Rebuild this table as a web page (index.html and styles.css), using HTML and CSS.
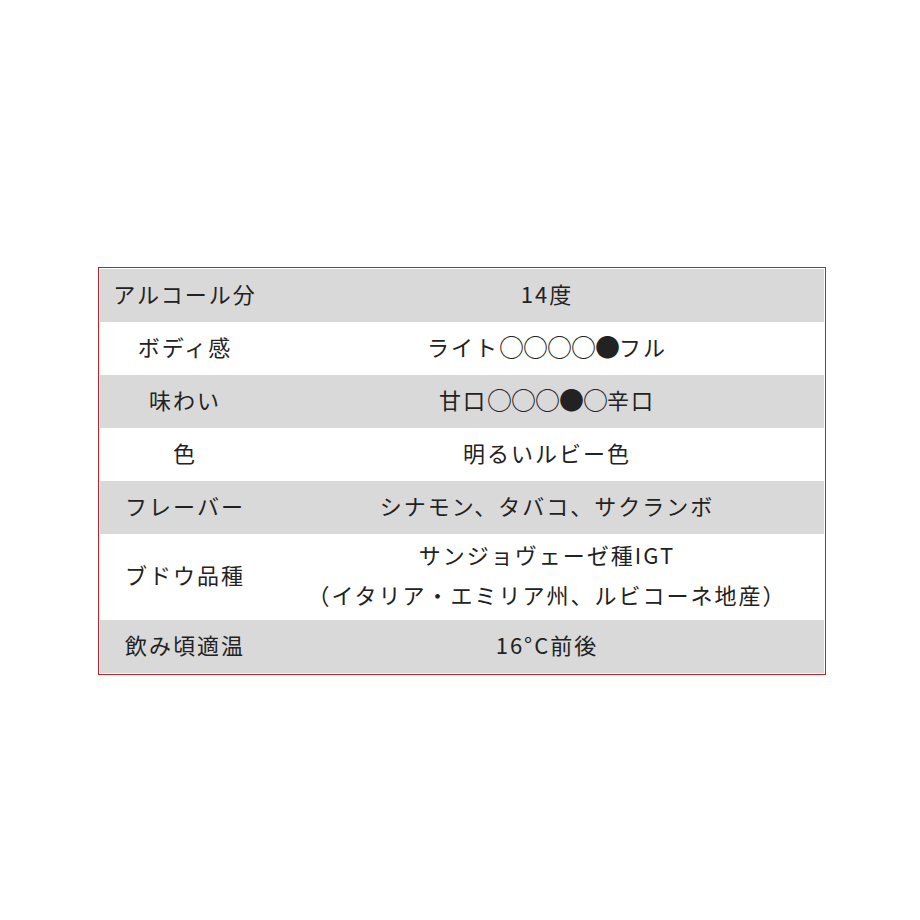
FILE: index.html
```html
<!DOCTYPE html>
<html lang="ja">
<head>
<meta charset="utf-8">
<link rel="stylesheet" href="styles.css">
</head>
<body>
<div class="frame">
  <table class="spec">
    <tr class="gray"><th>アルコール分</th><td>14度</td></tr>
    <tr><th>ボディ感</th><td>ライト<span class="dot">○○○○●</span>フル</td></tr>
    <tr class="gray"><th>味わい</th><td>甘口<span class="dot">○○○●○</span>辛口</td></tr>
    <tr><th>色</th><td>明るいルビー色</td></tr>
    <tr class="gray"><th>フレーバー</th><td>シナモン、タバコ、サクランボ</td></tr>
    <tr class="tall"><th>ブドウ品種</th><td>サンジョヴェーゼ種IGT<br>（イタリア・エミリア州、ルビコーネ地産）</td></tr>
    <tr class="gray"><th>飲み頃適温</th><td>16°C前後</td></tr>
  </table>
</div>
</body>
</html>
```
FILE: styles.css
```css
html, body {
  margin: 0;
  padding: 0;
  background: #ffffff;
}
body {
  padding-top: 267px;
  padding-left: 98px;
  font-family: "Noto Sans CJK JP", "Noto Sans", sans-serif;
  color: #222222;
}
.frame {
  width: 724px;
  border: 1px solid #c81e26;
  padding: 1px;
  background: #ffffff;
}
.spec {
  width: 100%;
  border-collapse: collapse;
  border-spacing: 0;
}
.spec tr {
  height: 53px;
}
.spec th, .spec td {
  font-weight: normal;
  font-size: 22px;
  letter-spacing: 2px;
  line-height: 40px;
  padding: 0 0 6px;
  text-align: center;
  vertical-align: middle;
}
.spec th {
  width: 170px;
}
.spec tr.gray th, .spec tr.gray td {
  background: #d9d9d9;
}
.dot {
  font-size: 25px;
  letter-spacing: -1px;
  line-height: 0;
  position: relative;
  top: 1px;
}
```
